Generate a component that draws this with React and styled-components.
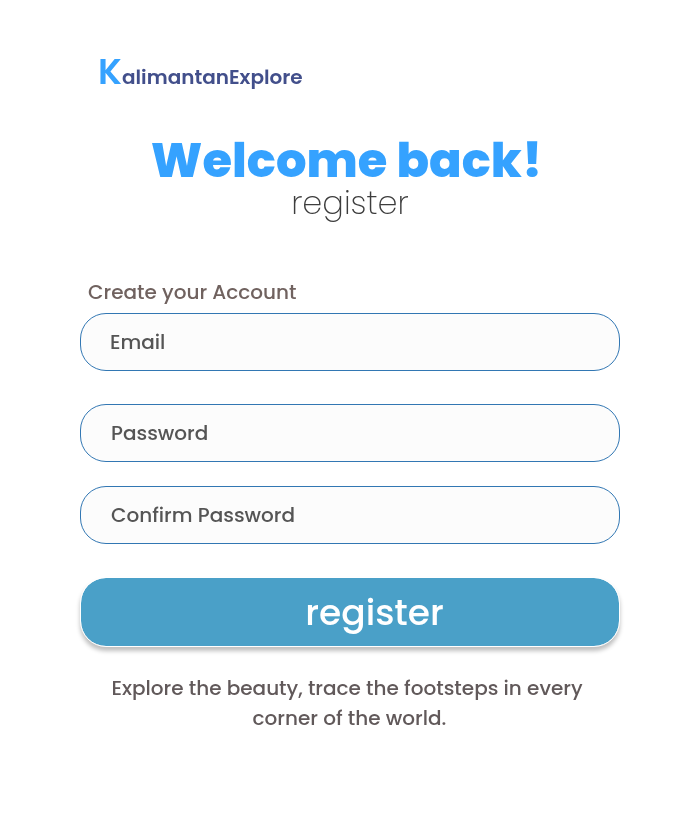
import React from 'react';
import styled, { createGlobalStyle } from 'styled-components';

const GlobalStyle = createGlobalStyle`
  *, *::before, *::after { box-sizing: border-box; }
  body {
    margin: 0;
    background: #fff;
    font-family: Poppins, Inter, 'Open Sans', sans-serif;
    font-feature-settings: 'cv11';
    -webkit-font-smoothing: antialiased;
  }
`;

const Page = styled.main`
  display: flex;
  flex-direction: column;
  width: 700px;
  height: 840px;
  padding: 50px 80px 0;
  will-change: transform;
`;

const Brand = styled.div`
  display: flex;
  align-items: baseline;
  height: 48px;
  padding-left: 18px;
  color: #424f8b;
  font-size: 20px;
  font-weight: 600;
  line-height: 44px;
`;

const BrandInitial = styled.span`
  width: 24px;
  color: #35a2ff;
  font-size: 36px;
  font-weight: 600;
`;

const Title = styled.h1`
  margin: 33px 0 0;
  padding-right: 7px;
  color: #35a2ff;
  font-size: 48px;
  font-weight: 800;
  line-height: 60px;
  text-align: center;
  white-space: nowrap;
`;

const Subtitle = styled.p`
  margin: 0;
  color: #3d3d3d;
  font-family: 'Poppins ExtraLight', Poppins, Inter, sans-serif;
  font-size: 32px;
  font-weight: 275;
  line-height: 24px;
  text-align: center;
`;

const Form = styled.form`
  display: flex;
  flex-direction: column;
  margin-top: 62px;
`;

const FormLabel = styled.div`
  height: 36px;
  padding-left: 8px;
  color: #70625f;
  font-size: 20px;
  font-weight: 500;
  line-height: 30px;
`;

const Field = styled.input`
  width: 540px;
  height: 58px;
  margin: 0 0 ${(p) => p.$gap}px;
  padding: 0 ${(p) => p.$inset}px;
  border: 1px solid #3277b3;
  border-radius: 26px;
  outline: none;
  background: #fcfcfc;
  color: #555;
  font: inherit;
  font-feature-settings: inherit;
  font-size: 20px;
  font-weight: 500;
  &::placeholder { color: #555; opacity: 1; }
`;

const SubmitButton = styled.button`
  width: 540px;
  height: 70px;
  padding: 2px 0 0 49px;
  border: 1px solid #fff;
  border-radius: 26px;
  background: #4aa0c8;
  background-clip: padding-box;
  box-shadow: 0 4px 4px rgba(0, 0, 0, 0.25);
  color: #fff;
  font: inherit;
  font-feature-settings: inherit;
  font-size: 36px;
  font-weight: 500;
  line-height: 66px;
`;

const Tagline = styled.p`
  margin: 26px 0 0;
  color: #61595a;
  font-size: 20px;
  font-weight: 500;
  line-height: 30px;
  text-align: center;
`;

const TaglineRow = styled.span`
  display: block;
  padding-right: ${(p) => p.$shift || 0}px;
`;

export default function App() {
  return (
    <>
      <GlobalStyle />
      <Page>
        <Brand>
          <BrandInitial>K</BrandInitial>alimantanExplore
        </Brand>
        <Title>Welcome back!</Title>
        <Subtitle>register</Subtitle>
        <Form onSubmit={(e) => e.preventDefault()}>
          <FormLabel>Create your Account</FormLabel>
          <Field type="email" placeholder="Email" $gap={33} $inset={29} />
          <Field type="password" placeholder="Password" $gap={24} $inset={30} />
          <Field type="password" placeholder="Confirm Password" $gap={33} $inset={30} />
          <SubmitButton type="submit">register</SubmitButton>
        </Form>
        <Tagline>
          <TaglineRow $shift={6}>Explore the beauty, trace the footsteps in every</TaglineRow>
          <TaglineRow $shift={1}>corner of the world.</TaglineRow>
        </Tagline>
      </Page>
    </>
  );
}
